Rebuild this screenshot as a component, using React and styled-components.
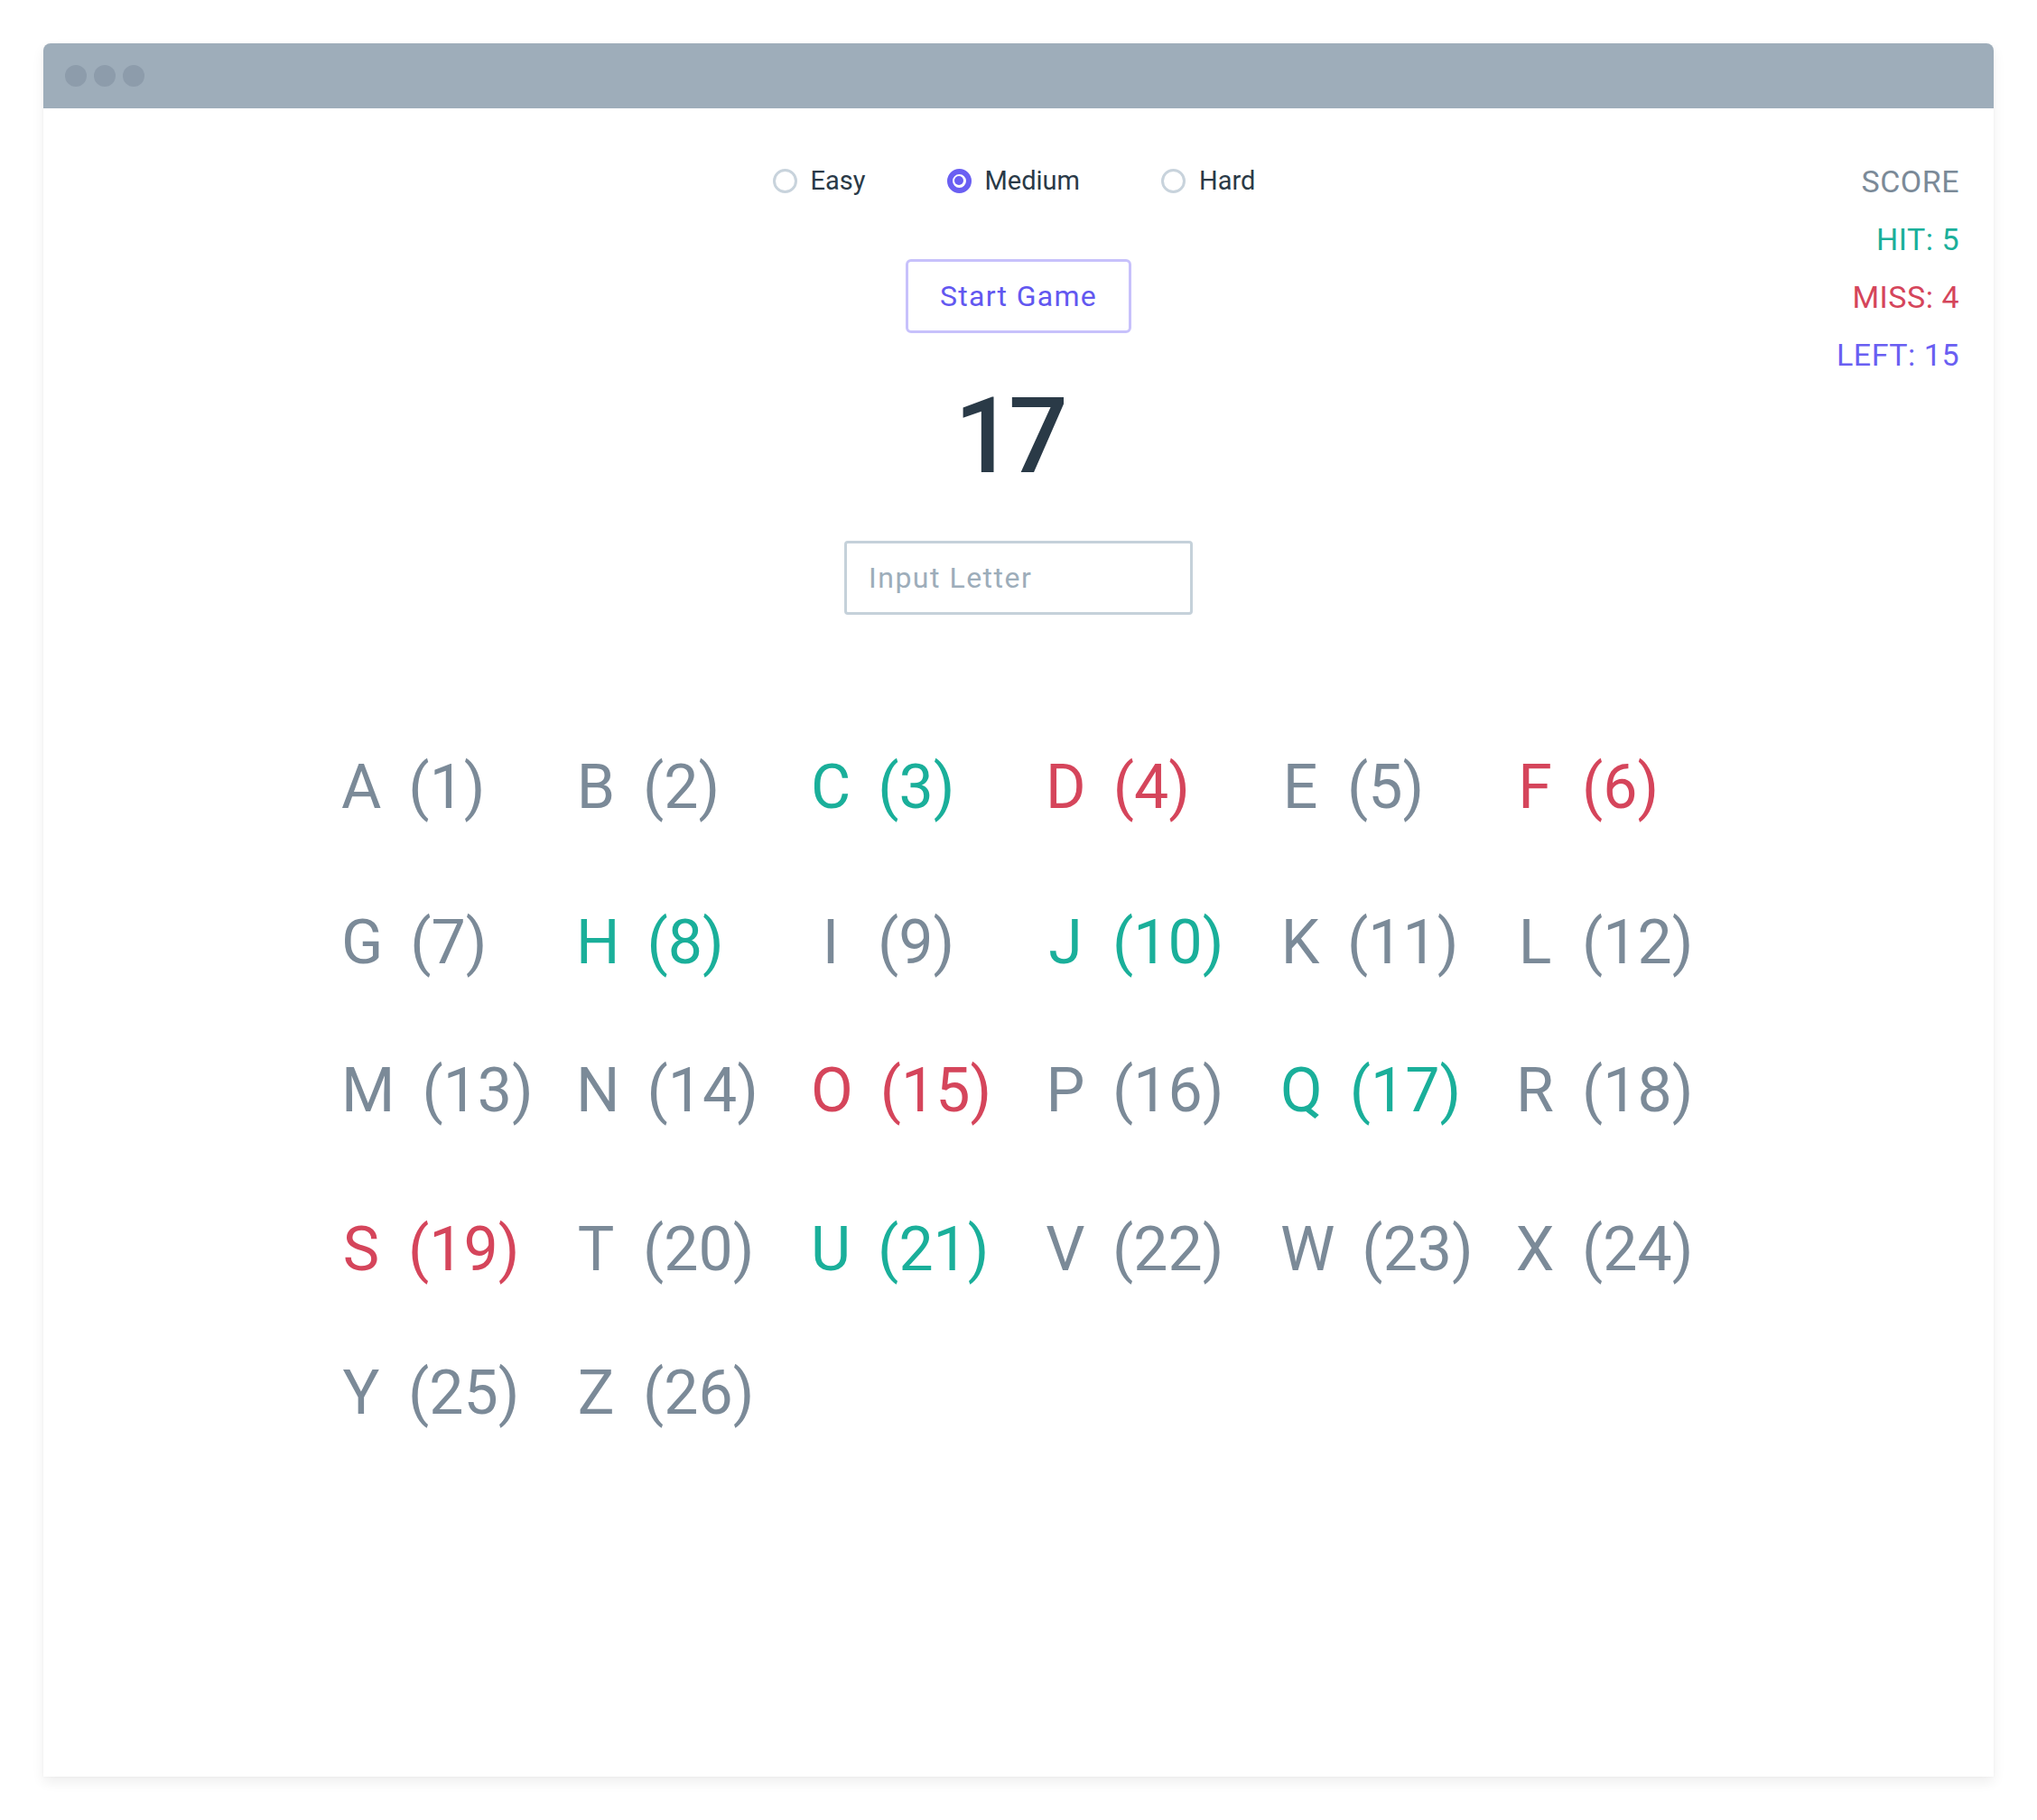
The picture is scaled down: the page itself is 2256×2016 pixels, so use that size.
import React from 'react';
import styled, { createGlobalStyle } from 'styled-components';

const GlobalStyle = createGlobalStyle`
  html, body {
    margin: 0;
    padding: 0;
    background: #ffffff;
  }
  body {
    font-family: Roboto, "Liberation Sans", Arial, sans-serif;
  }
  * {
    box-sizing: border-box;
  }
`;

const COLORS = {
  gray: '#7b8a98',
  hit: '#1aaf9a',
  miss: '#d5455b',
  left: '#6a5ff2',
  dark: '#2a3a47',
};

const LETTERS = 'ABCDEFGHIJKLMNOPQRSTUVWXYZ'.split('');
const HITS = ['C', 'H', 'J', 'Q', 'U'];
const MISSES = ['D', 'F', 'O', 'S'];

const Page = styled.div`
  padding: 48px;
`;

const Window = styled.div`
  width: 2160px;
  height: 1920px;
  background: #ffffff;
  border-radius: 8px 8px 0 0;
  box-shadow: 0 6px 14px rgba(0, 0, 0, 0.07), 0 0 3px rgba(0, 0, 0, 0.04);
  display: flex;
  flex-direction: column;
`;

const TitleBar = styled.div`
  height: 72px;
  background: #9eadba;
  border-radius: 8px 8px 0 0;
  display: flex;
  align-items: center;
  gap: 8px;
  padding-left: 24px;
`;

const Dot = styled.span`
  width: 24px;
  height: 24px;
  border-radius: 50%;
  background: #8d9cab;
`;

const Body = styled.div`
  flex: 1;
  display: flex;
  flex-direction: column;
`;

const TopArea = styled.div`
  display: grid;
  grid-template-columns: 1fr auto 1fr;
  align-items: start;
`;

const Controls = styled.div`
  display: flex;
  flex-direction: column;
  align-items: center;
  padding-top: 62px;
`;

const RadioGroup = styled.div`
  display: flex;
  align-items: center;
  gap: 90px;
  height: 36px;
  margin-right: 10px;
`;

const RadioOption = styled.label`
  display: flex;
  align-items: center;
  gap: 15px;
  font-size: 29px;
  line-height: 36px;
  color: ${COLORS.dark};
  cursor: pointer;
`;

const RadioMark = styled.span`
  position: relative;
  width: 27px;
  height: 27px;
  border-radius: 50%;
  border: ${(p) => (p.$checked ? `6px solid ${COLORS.left}` : '3px solid #c8d3dc')};
  background: #ffffff;

  &::after {
    content: '';
    display: ${(p) => (p.$checked ? 'block' : 'none')};
    position: absolute;
    left: 50%;
    top: 50%;
    width: 10px;
    height: 10px;
    margin: -5px 0 0 -5px;
    border-radius: 50%;
    background: ${COLORS.left};
  }
`;

const StartButton = styled.button`
  margin-top: 69px;
  width: 250px;
  height: 82px;
  border: 3px solid #c7c1fb;
  border-radius: 6px;
  background: #ffffff;
  color: #6257f0;
  font-family: inherit;
  font-size: 32px;
  letter-spacing: 1.3px;
  cursor: pointer;
`;

const Target = styled.div`
  margin-top: 56px;
  margin-right: 22px;
  font-size: 116px;
  font-weight: 500;
  line-height: 116px;
  height: 116px;
  color: ${COLORS.dark};
  letter-spacing: -6px;
`;

const LetterInput = styled.input`
  margin-top: 58px;
  width: 386px;
  height: 82px;
  border: 3px solid #c5d1da;
  border-radius: 4px;
  padding: 0 24px;
  font-family: inherit;
  font-size: 32px;
  letter-spacing: 1.5px;
  color: ${COLORS.dark};
  outline: none;

  &::placeholder {
    color: #9dadba;
  }
`;

const Score = styled.div`
  justify-self: end;
  padding: 49px 38px 0 0;
  display: flex;
  flex-direction: column;
  align-items: flex-end;
`;

const ScoreLine = styled.div`
  font-size: 34px;
  line-height: 64px;
  color: ${(p) => p.$color};
  letter-spacing: 0.5px;
`;

const LetterGrid = styled.div`
  margin-top: 157px;
  padding-left: 330px;
  display: grid;
  grid-template-columns: repeat(6, 260px);
  grid-template-rows: 172px 164px 176px 159px auto;
`;

const Cell = styled.div`
  display: flex;
  align-items: baseline;
  font-size: 68px;
  line-height: 68px;
  color: ${(p) => p.$color};
  white-space: nowrap;
`;

const Letter = styled.span`
  display: inline-block;
  min-width: 44px;
  text-align: center;
`;

const Code = styled.span`
  margin-left: 30px;
`;

const letterColor = (l) => {
  if (HITS.includes(l)) return COLORS.hit;
  if (MISSES.includes(l)) return COLORS.miss;
  return COLORS.gray;
};

const levels = ['Easy', 'Medium', 'Hard'];

const App = () => {
  const [level, setLevel] = React.useState('Medium');

  return (
    <Page>
      <GlobalStyle />
      <Window>
        <TitleBar>
          <Dot />
          <Dot />
          <Dot />
        </TitleBar>
        <Body>
          <TopArea>
            <div />
            <Controls>
              <RadioGroup>
                {levels.map((l) => (
                  <RadioOption key={l} onClick={() => setLevel(l)}>
                    <RadioMark $checked={level === l} />
                    {l}
                  </RadioOption>
                ))}
              </RadioGroup>
              <StartButton>Start Game</StartButton>
              <Target>17</Target>
              <LetterInput placeholder="Input Letter" />
            </Controls>
            <Score>
              <ScoreLine $color={COLORS.gray}>SCORE</ScoreLine>
              <ScoreLine $color={COLORS.hit}>HIT: 5</ScoreLine>
              <ScoreLine $color={COLORS.miss}>MISS: 4</ScoreLine>
              <ScoreLine $color={COLORS.left}>LEFT: 15</ScoreLine>
            </Score>
          </TopArea>

          <LetterGrid>
            {LETTERS.map((l, i) => (
              <Cell key={l} $color={letterColor(l)}>
                <Letter>{l}</Letter>
                <Code>({i + 1})</Code>
              </Cell>
            ))}
          </LetterGrid>
        </Body>
      </Window>
    </Page>
  );
};

export default App;
